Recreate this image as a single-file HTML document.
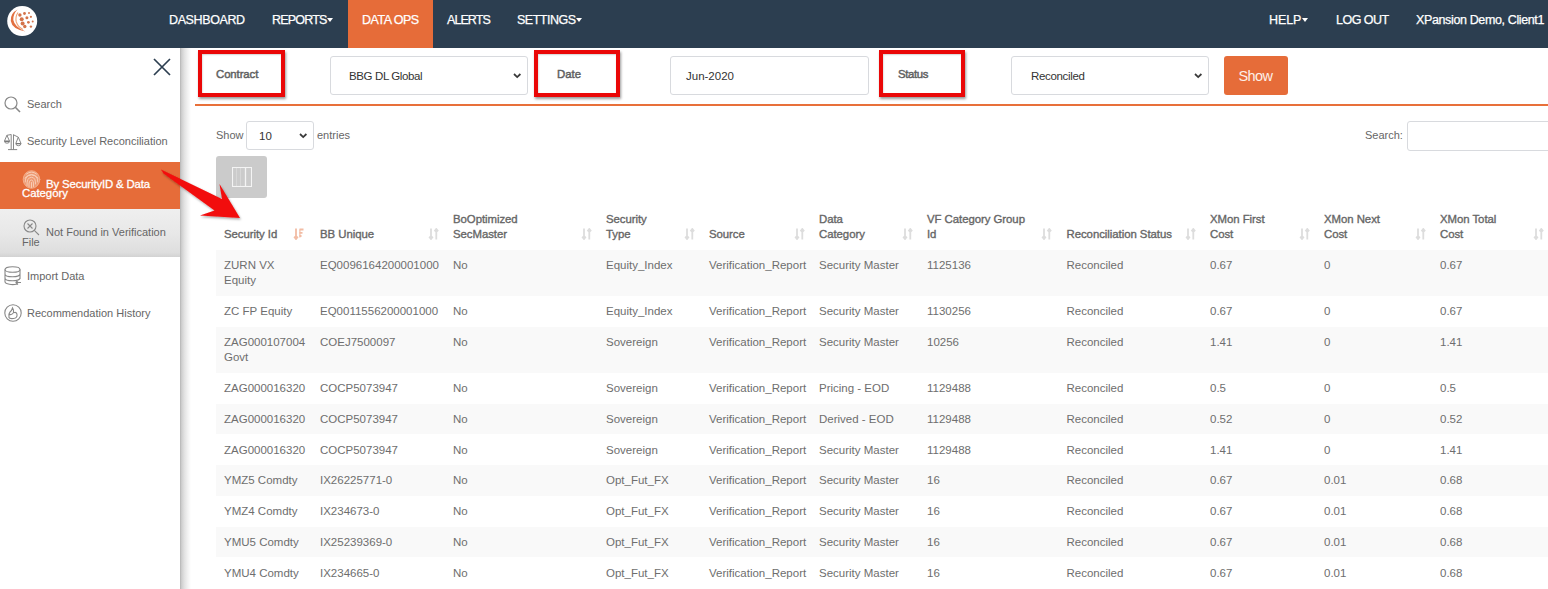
<!DOCTYPE html>
<html><head><meta charset="utf-8">
<style>
*{box-sizing:border-box;margin:0;padding:0}
html,body{width:1548px;height:589px;overflow:hidden;background:#fff;font-family:"Liberation Sans",sans-serif;position:relative}
.abs{position:absolute;white-space:nowrap}
#nav{position:absolute;left:0;top:0;width:1548px;height:48px;background:#2c3e50}
.ni{position:absolute;top:14px;font-size:12.5px;line-height:13px;color:#fff;-webkit-text-stroke:0.25px #fff;white-space:nowrap;letter-spacing:-0.5px}
.caret{display:inline-block;width:0;height:0;border-left:3.5px solid transparent;border-right:3.5px solid transparent;border-top:4px solid #fff;vertical-align:middle;margin-left:0.5px;position:relative;top:-1px}
#side{position:absolute;left:0;top:48px;width:180px;height:541px;background:#fff}
#sideshadow{position:absolute;left:180px;top:48px;width:11px;height:541px;background:linear-gradient(to right,#b4b4b4,#cfcfcf 15%,#e2e2e2 40%,#f2f2f2 70%,#fff)}
.si{position:absolute;left:27px;font-size:11px;color:#666}
.redbox{position:absolute;border:4px solid #ea0707;box-shadow:1px 2px 2.5px rgba(0,0,0,.4),inset 0.5px 1px 1.5px rgba(0,0,0,.18)}
.lbl{position:absolute;font-size:11.4px;font-weight:normal;-webkit-text-stroke:0.45px #5f5f5f;color:#5f5f5f}
.sel{position:absolute;border:1px solid #d8dade;border-radius:3px;background:#fff;font-size:11.5px;color:#333}
.chev{position:absolute;width:5.6px;height:5.6px;border-right:1.8px solid #3a3a3a;border-bottom:1.8px solid #3a3a3a;transform:rotate(45deg)}
table{position:absolute;left:216px;top:203.3px;border-collapse:collapse;table-layout:fixed;width:1334px}
th{font-size:11.4px;font-weight:normal;-webkit-text-stroke:0.35px #666;color:#666;letter-spacing:-0.05px;text-align:left;vertical-align:bottom;padding:8.4px 8px 7px;line-height:15.4px;position:relative}
td{font-size:11.5px;color:#6e6e6e;text-align:left;vertical-align:top;padding:8.4px 8px 7px;line-height:15.4px;white-space:nowrap}
tbody tr:nth-child(odd){background:#f9f9f9}
.sort{position:absolute;right:6.5px;bottom:9.5px;width:11px;height:12px}
</style></head><body>
<div id="nav">
  <svg class="abs" style="left:7px;top:6px" width="31" height="31" viewBox="0 0 31 31">
    <circle cx="15.2" cy="15.1" r="15" fill="#fff"/>
    <path d="M10.5 3.5 Q3 7.5 3.8 15 Q5 23 18.5 25.5 Q7.5 21 6.3 14 Q6 8 10.5 3.5 Z" fill="#e27040"/>
    <path d="M11 6.5 Q8 11 9.3 16 Q11 21 16 23.5" fill="none" stroke="#f0a57a" stroke-width="1.1"/>
    <g fill="#d4734a">
      <circle cx="12.9" cy="9" r="1.7"/><circle cx="17.5" cy="7.5" r="1.4"/><circle cx="22" cy="6.9" r="1"/>
      <circle cx="14.7" cy="13.3" r="2"/><circle cx="19.9" cy="11.8" r="1.5"/><circle cx="23.9" cy="10.8" r="1.1"/>
      <circle cx="15.6" cy="17.6" r="2"/><circle cx="21.4" cy="16.3" r="1.4"/><circle cx="25.7" cy="15.4" r="1"/>
      <circle cx="17.8" cy="20.5" r="1.7"/><circle cx="23.9" cy="20.6" r="1.2"/>
    </g>
  </svg>
  <div class="ni" style="left:169px;letter-spacing:-0.38px">DASHBOARD</div>
  <div class="ni" style="left:272px;letter-spacing:-0.8px">REPORTS<span class="caret"></span></div>
  <div style="position:absolute;left:348px;top:0;width:85px;height:48px;background:#e66c39"></div>
  <div class="ni" style="left:362px">DATA OPS</div>
  <div class="ni" style="left:447px;letter-spacing:-0.92px">ALERTS</div>
  <div class="ni" style="left:517px">SETTINGS<span class="caret"></span></div>
  <div class="ni" style="left:1269px;letter-spacing:-0.1px">HELP<span class="caret"></span></div>
  <div class="ni" style="left:1336px">LOG OUT</div>
  <div class="ni" style="left:1416px;letter-spacing:-0.37px">XPansion Demo, Client1</div>
</div>

<div id="side">
  <svg class="abs" style="left:152px;top:9px" width="20" height="20" viewBox="0 0 20 20"><path d="M2 2 L18 18 M18 2 L2 18" stroke="#2c3e50" stroke-width="1.7" fill="none"/></svg>
  <svg class="abs" style="left:4px;top:48px" width="18" height="17" viewBox="0 0 18 17"><circle cx="7" cy="7" r="6" fill="none" stroke="#888" stroke-width="1.2"/><path d="M11.3 11.3 L16 16" stroke="#888" stroke-width="1.6"/></svg>
  <div class="si" style="top:49.7px">Search</div>
  <svg class="abs" style="left:4px;top:86px" width="18" height="17" viewBox="0 0 18 17" fill="none" stroke="#7a7a7a" stroke-width="0.9"><path d="M7.2 0.5 V15.4 M9.5 0.5 V15.4 M4 15.6 H13.2 M2.9 1.3 L7.2 0.5 M9.5 0.8 L14.3 3.2 M2.9 1.3 L0.4 7.2 Q0.5 9.2 3 9.2 Q5.5 9.2 5.6 7.2 Z M14.3 3.2 L11.8 9.5 Q12 11.7 14.4 11.7 Q16.9 11.7 17 9.5 Z"/><path d="M0.6 7.3 H5.4 M12 9.6 H16.8" stroke-width="1.4"/></svg>
  <div class="si" style="top:86.6px">Security Level Reconciliation</div>
  <div style="position:absolute;left:0;top:113.5px;width:180px;height:47.5px;background:#e66c39"></div>
  <svg class="abs" style="left:22px;top:122px" width="19" height="19" viewBox="0 0 19 19" fill="none" stroke="#f9d5c0" stroke-width="0.85" stroke-linecap="round"><ellipse cx="9.5" cy="9.5" rx="8.3" ry="8.8" fill="#ee9a72" stroke="#f4b392"/><path d="M4.5 4 Q9.5 0 14.5 4 M3 8 Q9.5 1.5 16 8 M3.2 12 Q3 5 9.5 4.5 Q16 5 15.8 12 M5 15.5 Q4.5 7.5 9.5 7.3 Q14 7.5 13.5 14 M7 16.8 Q6.5 10 9.5 10 Q12 10.2 11.5 16.5 M9.5 12.5 V17.5"/></svg>
  <div class="si" style="top:129.5px;left:46px;color:#fff;font-size:11.4px;-webkit-text-stroke:0.3px #fff;letter-spacing:-0.15px">By SecurityID &amp; Data</div>
  <div class="si" style="top:139.4px;left:22px;color:#fff;font-size:11.4px;-webkit-text-stroke:0.3px #fff;letter-spacing:-0.05px">Category</div>
  <div style="position:absolute;left:0;top:161px;width:180px;height:48px;background:linear-gradient(to bottom,#efefef,#e8e8e8 50%,#dedede 90%,#d2d2d2)"></div>
  <svg class="abs" style="left:23px;top:171px" width="17" height="17" viewBox="0 0 17 17" fill="none" stroke="#888" stroke-width="1.1"><circle cx="7" cy="7" r="6"/><path d="M4.5 4.5 L9.5 9.5 M9.5 4.5 L4.5 9.5 M11.3 11.3 L16 16"/></svg>
  <div class="si" style="top:178px;left:46px">Not Found in Verification</div>
  <div class="si" style="top:188.4px;left:22px">File</div>
  <svg class="abs" style="left:4px;top:218px" width="18" height="20" viewBox="0 0 18 20" fill="none" stroke="#888" stroke-width="1.1"><ellipse cx="8.5" cy="3.5" rx="7.5" ry="2.8"/><path d="M1 3.5 V16 A7.5 2.8 0 0 0 13 18 M16 3.5 V13 M1 8 A7.5 2.8 0 0 0 16 8 M1 12 A7.5 2.8 0 0 0 16 12 M12 16.5 L17 16.5 M14 14.5 L12 16.5 L14 18.5"/></svg>
  <div class="si" style="top:222px">Import Data</div>
  <svg class="abs" style="left:4px;top:256px" width="18" height="18" viewBox="0 0 18 18" fill="none" stroke="#888" stroke-width="1.1"><circle cx="9" cy="9" r="8.2"/><path d="M5 13.5 Q5.5 15 9.5 14.5 Q13.5 14 13 10.5 Q12.5 8 10.5 8.5 L9.5 8.8 Q10 6 8.5 3.8 Q7.8 6.5 6 8 Q4.5 9.5 5 13.5 Z M5.5 10.5 Q8 11 9.5 8.8"/></svg>
  <div class="si" style="top:259px">Recommendation History</div>
</div>
<div id="sideshadow"></div>

<!-- filter bar -->
<div class="redbox" style="left:198px;top:50px;width:87px;height:47px"></div>
<div class="lbl" style="left:216px;top:68px;letter-spacing:-0.1px">Contract</div>
<div class="sel" style="left:330px;top:56px;width:198px;height:39px"><span class="abs" style="left:18px;top:13px;letter-spacing:-0.38px">BBG DL Global</span><svg class="abs" style="left:181.8px;top:15.7px" width="9" height="6" viewBox="0 0 9 6"><path d="M1 1 L4.2 4.1 L7.4 1" fill="none" stroke="#3a3a3a" stroke-width="1.75"/></svg></div>
<div class="redbox" style="left:534px;top:50px;width:86px;height:47px"></div>
<div class="lbl" style="left:557px;top:68px">Date</div>
<div class="sel" style="left:670px;top:56px;width:199px;height:39px"><span class="abs" style="left:15px;top:13px">Jun-2020</span></div>
<div class="redbox" style="left:879px;top:50px;width:86px;height:47px"></div>
<div class="lbl" style="left:898px;top:68px;letter-spacing:-0.35px">Status</div>
<div class="sel" style="left:1011px;top:56px;width:198px;height:39px"><span class="abs" style="left:19px;top:13px;letter-spacing:-0.33px">Reconciled</span><svg class="abs" style="left:182.2px;top:15.7px" width="9" height="6" viewBox="0 0 9 6"><path d="M1 1 L4.2 4.1 L7.4 1" fill="none" stroke="#3a3a3a" stroke-width="1.75"/></svg></div>
<div style="position:absolute;left:1224px;top:56px;width:64px;height:39px;background:#e66c39;border-radius:3px"><span class="abs" style="left:14.5px;top:12px;font-size:14.5px;color:#fdf0e8;letter-spacing:-0.6px">Show</span></div>
<div style="position:absolute;left:195px;top:103.5px;width:1353px;height:2px;background:#e8703a"></div>

<div class="abs" style="left:216px;top:129px;font-size:11px;color:#666">Show</div>
<div class="sel" style="left:246px;top:121px;width:68px;height:29px"><span class="abs" style="left:12px;top:8px;font-size:11.5px">10</span><svg class="abs" style="left:52px;top:10.7px" width="9" height="6" viewBox="0 0 9 6"><path d="M1 1 L4.2 4.1 L7.4 1" fill="none" stroke="#3a3a3a" stroke-width="1.75"/></svg></div>
<div class="abs" style="left:317px;top:129px;font-size:11px;color:#666">entries</div>
<div class="abs" style="left:1365px;top:129px;font-size:11px;color:#666">Search:</div>
<div class="sel" style="left:1407px;top:121px;width:160px;height:30px"></div>
<div style="position:absolute;left:216px;top:156px;width:51px;height:42px;background:#cbcbcb;border-radius:3px">
  <svg class="abs" style="left:16px;top:11px" width="20" height="20" viewBox="0 0 20 20" fill="none" stroke="#f4f4f4" stroke-width="1.1"><rect x="0.5" y="0.5" width="19" height="19"/><path d="M13.5 0.5 V19.5" stroke-width="1.3"/><path d="M4.5 1 V19 M8.5 1 V19" stroke-opacity="0.3"/></svg>
</div>





<!--TABLE-->
<table><colgroup>
<col style="width:96px">
<col style="width:133px">
<col style="width:153px">
<col style="width:103px">
<col style="width:110px">
<col style="width:108px">
<col style="width:139.5px">
<col style="width:143.5px">
<col style="width:114px">
<col style="width:116px">
<col style="width:118px">
</colgroup><thead><tr>
<th>Security Id<svg class="sort" style="right:8.5px" viewBox="0 0 11 12" fill="none" stroke="#f2bca4" stroke-width="1.8"><path d="M3 0.5 V11 M1.2 8.6 L3 11 L4.8 8.6 M6.5 1.5 H10.5 M6.5 4.8 H9.5 M6.5 8 H8.5"/><path d="M6.9 1.5 V9.5" stroke-width="1.2"/></svg></th>
<th>BB Unique<svg class="sort" viewBox="0 0 11 12" fill="none" stroke="#dddddd" stroke-width="1.8"><path d="M3 0.5 V11 M1.2 8.6 L3 11 L4.8 8.6 M8.3 11.5 V1 M6.5 3.4 L8.3 1 L10.1 3.4"/></svg></th>
<th>BoOptimized<br>SecMaster<svg class="sort" viewBox="0 0 11 12" fill="none" stroke="#dddddd" stroke-width="1.8"><path d="M3 0.5 V11 M1.2 8.6 L3 11 L4.8 8.6 M8.3 11.5 V1 M6.5 3.4 L8.3 1 L10.1 3.4"/></svg></th>
<th>Security<br>Type<svg class="sort" viewBox="0 0 11 12" fill="none" stroke="#dddddd" stroke-width="1.8"><path d="M3 0.5 V11 M1.2 8.6 L3 11 L4.8 8.6 M8.3 11.5 V1 M6.5 3.4 L8.3 1 L10.1 3.4"/></svg></th>
<th>Source<svg class="sort" viewBox="0 0 11 12" fill="none" stroke="#dddddd" stroke-width="1.8"><path d="M3 0.5 V11 M1.2 8.6 L3 11 L4.8 8.6 M8.3 11.5 V1 M6.5 3.4 L8.3 1 L10.1 3.4"/></svg></th>
<th>Data<br>Category<svg class="sort" viewBox="0 0 11 12" fill="none" stroke="#dddddd" stroke-width="1.8"><path d="M3 0.5 V11 M1.2 8.6 L3 11 L4.8 8.6 M8.3 11.5 V1 M6.5 3.4 L8.3 1 L10.1 3.4"/></svg></th>
<th>VF Category Group<br>Id<svg class="sort" viewBox="0 0 11 12" fill="none" stroke="#dddddd" stroke-width="1.8"><path d="M3 0.5 V11 M1.2 8.6 L3 11 L4.8 8.6 M8.3 11.5 V1 M6.5 3.4 L8.3 1 L10.1 3.4"/></svg></th>
<th>Reconciliation Status<svg class="sort" viewBox="0 0 11 12" fill="none" stroke="#dddddd" stroke-width="1.8"><path d="M3 0.5 V11 M1.2 8.6 L3 11 L4.8 8.6 M8.3 11.5 V1 M6.5 3.4 L8.3 1 L10.1 3.4"/></svg></th>
<th>XMon First<br>Cost<svg class="sort" viewBox="0 0 11 12" fill="none" stroke="#dddddd" stroke-width="1.8"><path d="M3 0.5 V11 M1.2 8.6 L3 11 L4.8 8.6 M8.3 11.5 V1 M6.5 3.4 L8.3 1 L10.1 3.4"/></svg></th>
<th>XMon Next<br>Cost<svg class="sort" viewBox="0 0 11 12" fill="none" stroke="#dddddd" stroke-width="1.8"><path d="M3 0.5 V11 M1.2 8.6 L3 11 L4.8 8.6 M8.3 11.5 V1 M6.5 3.4 L8.3 1 L10.1 3.4"/></svg></th>
<th>XMon Total<br>Cost<svg class="sort" viewBox="0 0 11 12" fill="none" stroke="#dddddd" stroke-width="1.8"><path d="M3 0.5 V11 M1.2 8.6 L3 11 L4.8 8.6 M8.3 11.5 V1 M6.5 3.4 L8.3 1 L10.1 3.4"/></svg></th>
</tr></thead><tbody>
<tr><td>ZURN VX<br>Equity</td><td>EQ0096164200001000</td><td>No</td><td>Equity_Index</td><td>Verification_Report</td><td>Security Master</td><td>1125136</td><td>Reconciled</td><td>0.67</td><td>0</td><td>0.67</td></tr>
<tr><td>ZC FP Equity</td><td>EQ0011556200001000</td><td>No</td><td>Equity_Index</td><td>Verification_Report</td><td>Security Master</td><td>1130256</td><td>Reconciled</td><td>0.67</td><td>0</td><td>0.67</td></tr>
<tr><td>ZAG000107004<br>Govt</td><td>COEJ7500097</td><td>No</td><td>Sovereign</td><td>Verification_Report</td><td>Security Master</td><td>10256</td><td>Reconciled</td><td>1.41</td><td>0</td><td>1.41</td></tr>
<tr><td>ZAG000016320</td><td>COCP5073947</td><td>No</td><td>Sovereign</td><td>Verification_Report</td><td>Pricing - EOD</td><td>1129488</td><td>Reconciled</td><td>0.5</td><td>0</td><td>0.5</td></tr>
<tr><td>ZAG000016320</td><td>COCP5073947</td><td>No</td><td>Sovereign</td><td>Verification_Report</td><td>Derived - EOD</td><td>1129488</td><td>Reconciled</td><td>0.52</td><td>0</td><td>0.52</td></tr>
<tr><td>ZAG000016320</td><td>COCP5073947</td><td>No</td><td>Sovereign</td><td>Verification_Report</td><td>Security Master</td><td>1129488</td><td>Reconciled</td><td>1.41</td><td>0</td><td>1.41</td></tr>
<tr><td>YMZ5 Comdty</td><td>IX26225771-0</td><td>No</td><td>Opt_Fut_FX</td><td>Verification_Report</td><td>Security Master</td><td>16</td><td>Reconciled</td><td>0.67</td><td>0.01</td><td>0.68</td></tr>
<tr><td>YMZ4 Comdty</td><td>IX234673-0</td><td>No</td><td>Opt_Fut_FX</td><td>Verification_Report</td><td>Security Master</td><td>16</td><td>Reconciled</td><td>0.67</td><td>0.01</td><td>0.68</td></tr>
<tr><td>YMU5 Comdty</td><td>IX25239369-0</td><td>No</td><td>Opt_Fut_FX</td><td>Verification_Report</td><td>Security Master</td><td>16</td><td>Reconciled</td><td>0.67</td><td>0.01</td><td>0.68</td></tr>
<tr><td>YMU4 Comdty</td><td>IX234665-0</td><td>No</td><td>Opt_Fut_FX</td><td>Verification_Report</td><td>Security Master</td><td>16</td><td>Reconciled</td><td>0.67</td><td>0.01</td><td>0.68</td></tr>
</tbody></table>
<!--/TABLE-->
<!--ARROW-->
<svg class="abs" style="left:150px;top:160px;overflow:visible" width="100" height="70" viewBox="150 160 100 70">
<defs><filter id="sh" x="-20%" y="-20%" width="150%" height="150%"><feDropShadow dx="1" dy="1.5" stdDeviation="1" flood-color="#000" flood-opacity="0.35"/></filter></defs>
<polygon points="161,169.5 222,199 219.5,184 240,218 200,215.5 214.5,210.5 163.5,173.5" fill="#f20c0c" filter="url(#sh)"/>
</svg>

</body></html>
